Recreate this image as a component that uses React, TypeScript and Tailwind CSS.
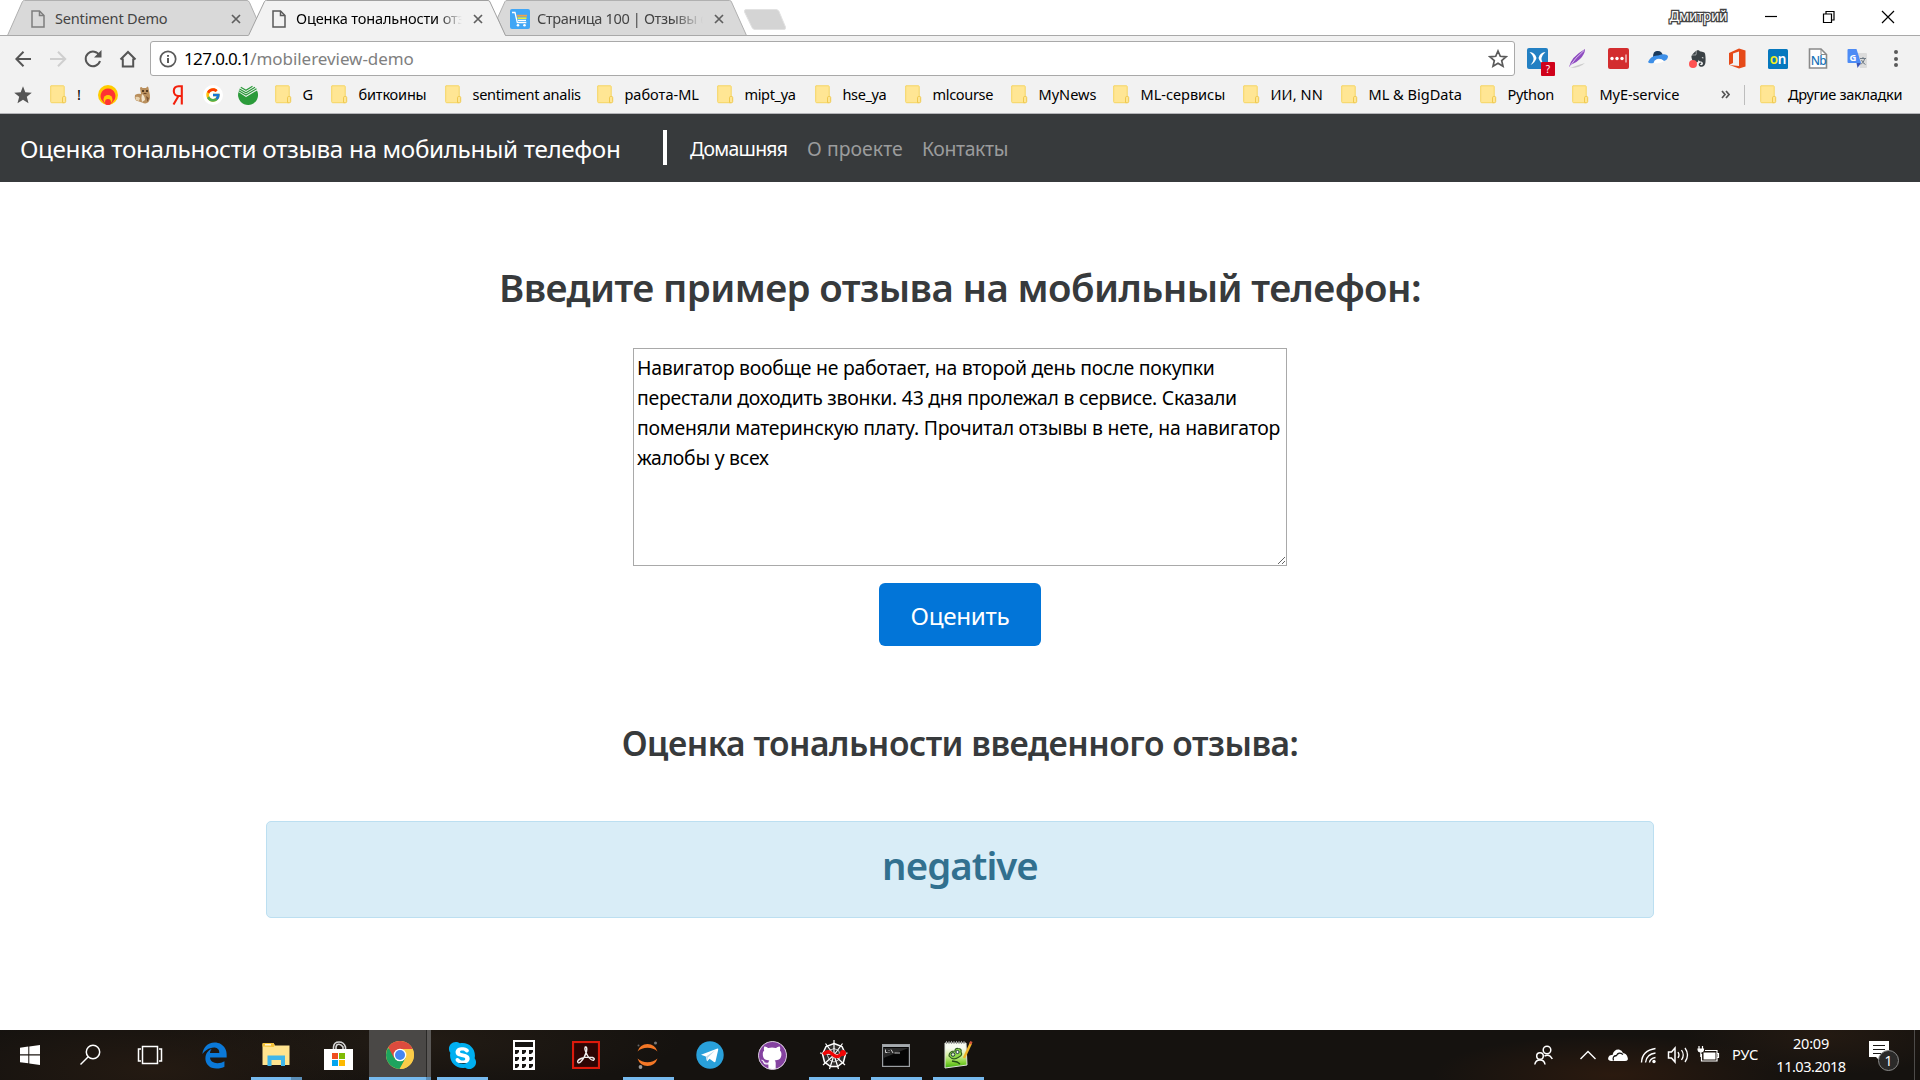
import type { ReactNode } from 'react';
import { FaEdgeLegacy, FaEvernote, FaGithub, FaSkype } from 'react-icons/fa6';
import { FcGoogle } from 'react-icons/fc';

/* ---------- browser tabs ---------- */

function PageIcon({ color }: { color: string }) {
  return (
    <svg width="14" height="18" viewBox="0 0 14 18" fill="none" stroke={color} strokeWidth="1.5">
      <path d="M1 1h7.5L13 5.500V17H1z" />
      <path d="M8.500 1v4.500H13" />
    </svg>
  );
}

function CloseX() {
  return (
    <svg width="10" height="10" viewBox="0 0 10 10" stroke="#5f5f5f" strokeWidth="1.7">
      <path d="M1 1l8 8M9 1L1 9" />
    </svg>
  );
}

function CartIcon() {
  return (
    <svg width="20" height="20" viewBox="0 0 20 20">
      <rect width="20" height="20" rx="2" fill="#41a6f5" />
      <path d="M2 3.500h3l2.300 10h9" fill="none" stroke="#fff" strokeWidth="1.300" />
      <path d="M7 6.700h10" stroke="#f0a24a" strokeWidth="1.800" />
      <path d="M7.500 9.200h9" stroke="#e9f03a" strokeWidth="1.600" />
      <path d="M8 11.400h8" stroke="#fff" strokeWidth="1.200" />
      <circle cx="8" cy="16.300" r="1.300" fill="#fff" />
      <circle cx="14.500" cy="16.300" r="1.300" fill="#fff" />
    </svg>
  );
}

function TabStrip() {
  return (
    <div className="relative flex h-9 shrink-0 bg-white">
      <svg className="absolute top-0 left-0" width="1920" height="36" viewBox="0 0 1920 36" strokeWidth="1">
        <path d="M7.500 35.500L22.500 1.500Q23 .5 24.500 .5H247Q248.500 .5 249.500 2.500L264 35.500z" fill="#d9d9d9" stroke="#b0b0b0" />
        <path d="M497.500 18L505 1.500Q505.500 .5 507 .5H729.500Q731 .5 731.500 2L746.500 35.500H505z" fill="#d9d9d9" stroke="#b0b0b0" />
        <path d="M0 35.500H1920" stroke="#a9a9a9" />
        <path d="M248 36L264.500 1.500Q265 .5 266.500 .5H488Q489.500 .5 490 2L505.500 36z" fill="#f2f2f2" />
        <path d="M248.500 35.500L264.500 1.500Q265 .5 266.500 .5H488Q489.500 .5 490 2L505.500 35.500" fill="none" stroke="#a0a0a0" />
        <path d="M746 9.500H776Q778 9.500 779 11.500L785.500 27Q786 29.500 784 29.500H755Q753 29.500 752 27.500L744.500 12Q744 9.500 746 9.500z" fill="#d4d4d4" stroke="#e2e2e2" />
      </svg>
      <div className="relative flex h-[37px] w-[248px] items-center pl-[31px]">
        <PageIcon color="#7d7d7d" />
        <span className="ml-[10px] w-[176px] text-[14.55px] tracking-[-0.2px] text-[#444]">Sentiment Demo</span>
        <CloseX />
      </div>
      <div className="relative flex h-[37px] w-[248px] items-center pl-[24px]">
        <PageIcon color="#5a5a5a" />
        <span className="ml-[10px] w-[166px] overflow-hidden mask-r-from-85% whitespace-nowrap text-[14.55px] tracking-[-0.14px] text-black">
          Оценка тональности отзыва
        </span>
        <span className="ml-[11px] flex"><CloseX /></span>
      </div>
      <div className="relative flex h-[37px] w-[248px] items-center pl-[14px]">
        <CartIcon />
        <span className="ml-[7px] w-[166px] overflow-hidden mask-r-from-82% whitespace-nowrap text-[14.55px] tracking-[-0.36px] text-[#444]">
          Страница 100 | Отзывы о
        </span>
        <span className="ml-[11px] flex"><CloseX /></span>
      </div>
      <div className="relative ml-auto flex h-[33px] items-center">
        <span className="mr-[38px] text-[13.600px] tracking-[-0.400px] text-white [-webkit-text-stroke:2.500px_#444] [paint-order:stroke_fill]">Дмитрий</span>
        <svg width="130" height="14" viewBox="0 0 130 14" fill="none" stroke="#000" strokeWidth="1.200">
          <path d="M0 6.500h12" />
          <path d="M58.500 4h8v8.500h-8zM61 4V1.500h8V10h-2.500" />
          <path d="M117 1l12 12M129 1L117 13" />
        </svg>
        <span className="w-[25px]" />
      </div>
    </div>
  );
}

/* ---------- toolbar ---------- */

const Translate = () => (
  <svg width="20" height="20" viewBox="0 0 20 20">
    <path d="M9 4h10q1 0 1 1v13q0 1-1 1h-6z" fill="#dcdcdc" />
    <path d="M1.500 0h8l4.500 14H1.500Q.5 14 .5 13V1Q.5 0 1.500 0z" fill="#4e8cf5" />
    <path d="M9.500 14H14l-3.500 5z" fill="#3a55b8" />
    <text x="2.500" y="11.500" fontSize="9.500" fontWeight="700" fill="#fff">G</text>
    <path d="M13 9.500h6M16 8v1.500M17.800 9.500q-1 4-4 6M14.500 11q1 3 4 4.500" stroke="#6f7b86" fill="none" />
  </svg>
);

function Extensions() {
  return (
    <div className="ml-[12px] flex h-[21px] items-center gap-[19.800px]">
      <span className="relative block size-[21px]">
        <svg width="21" height="21" viewBox="0 0 21 21">
          <rect width="21" height="21" rx="2" fill="#2380c3" />
          <path d="M2.500 4Q8 4.500 9.500 10Q8 15 3.500 17Q7 13 6.500 10Q6 7 2.500 4zM18.500 4Q13 4.500 11.500 10q1.500 5 6 7Q14 13 14.500 10Q15 7 18.500 4z" fill="#fff" />
        </svg>
        <span className="absolute top-[14px] left-[14px] flex h-[14px] w-[14px] items-center justify-center rounded-[1px] bg-[#d0021b] text-[10px] leading-none text-white">?</span>
      </span>
      <svg width="20" height="21" viewBox="0 0 20 21">
        <path d="M2 20Q12 20 17 15Q10 17 2 20z" fill="#ccc" />
        <path d="M1 19Q3 9 17 1Q17 6 12 11Q8 15 3.500 16.500z" fill="#8e4bc0" />
        <path d="M2 18Q7 10 16 2.500" stroke="#d9c0ee" fill="none" />
      </svg>
      <svg width="21" height="21" viewBox="0 0 21 21">
        <rect width="21" height="21" rx="2" fill="#d32d2f" />
        <circle cx="4" cy="10.500" r="1.700" fill="#fff" /><circle cx="9" cy="10.500" r="1.700" fill="#fff" /><circle cx="14" cy="10.500" r="1.700" fill="#fff" />
        <path d="M18 6.500v8" stroke="#fff" />
      </svg>
      <svg width="20" height="20" viewBox="0 0 20 20">
        <path d="M5 8Q5 1 10 2Q14 2 15 7z" fill="#1b3a5c" />
        <path d="M0 13Q3 6 10 6.500Q18 4 20 7Q20 11 16 12Q13 9 9 10Q6 11 5.500 14Q1 15 0 13z" fill="#3d8fe8" />
        <path d="M6 14Q7 10 11 10.500Q15 10 16 12.500Q11 15 6 14z" fill="#fff" />
      </svg>
      <span className="relative block size-[20px]">
        <FaEvernote className="ml-px size-[19px] text-[#3a4145]" />
        <span className="absolute top-[11px] left-[1px] size-[8px] rounded-full bg-[#ff5252]" />
      </span>
      <svg width="20" height="21" viewBox="0 0 20 21">
        <path d="M1 5L11 .5l6.500 2v16l-6.500 2L1.500 17l9.500 1V3.500L5 5.500V15l-4 2z" fill="#e64a19" />
      </svg>
      <svg width="20" height="20" viewBox="0 0 20 20">
        <rect width="20" height="20" rx="1.500" fill="#0678be" />
        <text x="1.800" y="14.500" fontSize="13.500" fontWeight="600" fill="#f6f01e">o</text>
        <text x="9.800" y="14.500" fontSize="13.500" fontWeight="600" fill="#fff">n</text>
      </svg>
      <svg width="20" height="21" viewBox="0 0 20 21">
        <path d="M1.500 1h11.500l5.500 5.500V20H1.500z" fill="#fff" stroke="#8a8a8a" strokeWidth="1.600" />
        <path d="M13 1v5.500h5.500" fill="none" stroke="#8a8a8a" />
        <text x="2.700" y="17" fontSize="12" fontWeight="500" letterSpacing="-.7" fill="#1a73b8">Nb</text>
      </svg>
      <Translate />
    </div>
  );
}

function Toolbar() {
  return (
    <div className="flex h-[45px] shrink-0 items-center pl-[15px]">
      <svg width="122" height="20" viewBox="0 0 122 20" fill="none" stroke="#555" strokeWidth="2">
        <path d="M16 10H1.500M8.500 2.800L1.300 10l7.200 7.200" />
        <path d="M35 10h14.500M43 2.800L50.200 10L43 17.200" stroke="#cfcfcf" />
        <path d="M84.500 6.500A7.300 7.300 0 1 0 85 12" />
        <path d="M86.500 1v7.500h-7.500z" fill="#555" stroke="none" />
        <path d="M105.500 10.500L113 3l7.500 7.500M107.800 9.500V17.500h10.400V9.500" />
      </svg>
      <div className="ml-[13px] flex h-[35px] w-[1365px] items-center rounded-[3px] border border-[#a9a9a9] bg-white pr-[6px] pl-[8px]">
        <svg width="18" height="18" viewBox="0 0 18 18">
          <circle cx="9" cy="9" r="7.700" fill="none" stroke="#5a5a5a" strokeWidth="1.700" />
          <path d="M9 8v5M9 5v1.800" stroke="#5a5a5a" strokeWidth="2" />
        </svg>
        <span className="ml-[7px] text-[17px] whitespace-nowrap text-black">
          <span className="tracking-[-0.650px]">127.0.0.1</span>
          <span className="tracking-[-0.050px] text-[#808080]">/mobilereview-demo</span>
        </span>
        <svg className="ml-auto" width="20" height="20" viewBox="0 0 20 20" fill="none" stroke="#5a5a5a" strokeWidth="1.700">
          <path d="M10 2l2.300 5.300 5.700.500-4.300 3.800 1.300 5.600L10 14.300l-5 2.900 1.300-5.600L2 7.800l5.700-.5z" />
        </svg>
      </div>
      <Extensions />
      <span className="ml-[27px] flex flex-col gap-[2.500px]">
        <i className="size-[4px] rounded-full bg-[#5a5a5a]" />
        <i className="size-[4px] rounded-full bg-[#5a5a5a]" />
        <i className="size-[4px] rounded-full bg-[#5a5a5a]" />
      </span>
    </div>
  );
}

/* ---------- bookmarks ---------- */

const Folder = () => (
  <svg className="shrink-0" width="17" height="19" viewBox="0 0 17 19">
    <path d="M1 .8h12.500q.7 0 .7.700V17.700H1.700Q.7 17.700 .7 16.700V1q0-.2.300-.2z" fill="#ffe694" stroke="#f5d563" />
    <path d="M12.500 17.700v-5q0-1.200 1.200-1.200h1q1 0 1 1v4q0 1.200-1.200 1.200z" fill="#ffe694" stroke="#efc94f" />
  </svg>
);

const bookmarks: { label: string; box: string; track: string }[] = [
  { label: 'G', box: 'w-[56px]', track: '' },
  { label: 'биткоины', box: 'w-[114px]', track: 'tracking-[-0.2px]' },
  { label: 'sentiment analis', box: 'w-[152px]', track: 'tracking-[-0.28px]' },
  { label: 'работа-ML', box: 'w-[120px]', track: '' },
  { label: 'mipt_ya', box: 'w-[98px]', track: 'tracking-[-0.37px]' },
  { label: 'hse_ya', box: 'w-[90px]', track: 'tracking-[-0.4px]' },
  { label: 'mlcourse', box: 'w-[106px]', track: 'tracking-[-0.35px]' },
  { label: 'MyNews', box: 'w-[102px]', track: '' },
  { label: 'ML-сервисы', box: 'w-[130px]', track: '' },
  { label: 'ИИ, NN', box: 'w-[98px]', track: 'tracking-[0.1px]' },
  { label: 'ML & BigData', box: 'w-[139px]', track: '' },
  { label: 'Python', box: 'w-[92px]', track: 'tracking-[-0.3px]' },
  { label: 'MyE-service', box: 'w-[149px]', track: 'tracking-[-0.1px]' },
];

function Bookmarks() {
  return (
    <div className="flex h-[33px] shrink-0 items-center border-b border-[#b4b4b8] pb-[5px] pl-[14px] text-[14.550px] whitespace-nowrap text-black">
      <svg width="18" height="18" viewBox="0 0 18 18">
        <path d="M9 .300l2.300 6 6.500.400-5 4.100 1.700 6.500L9 13.700l-5.500 3.600 1.700-6.500-5-4.100 6.500-.4z" fill="#555" />
      </svg>
      <div className="ml-[18px] flex w-[48px] items-center"><Folder /><span className="ml-[10px]">!</span></div>
      <svg width="20" height="20" viewBox="0 0 20 20">
        <circle cx="10" cy="10" r="10" fill="#fc0" />
        <path d="M10 3.500a7.500 7.500 0 0 1 5.500 12.500Q13 20 10 20Q7 20 4.500 16A7.500 7.500 0 0 1 10 3.500z" fill="#f33" />
        <circle cx="10" cy="14.500" r="4.500" fill="#fc0" />
        <circle cx="10" cy="17" r="3" fill="#f33" />
      </svg>
      <svg className="ml-[16px]" width="18" height="20" viewBox="0 0 18 20">
        <path d="M1 10Q4 8 7 9L6 3Q7 1 8.500 3H12Q14 0 14.500 3L15.500 8Q17 13 14.500 17Q12 19.500 8 17.500L2 15.500Q0 13 1 10z" fill="#b98f5d" />
        <path d="M8 9Q11 11 11 15L8 17Q7 12 8 9z" fill="#f1e3cc" />
        <path d="M1.500 12Q4 11 6 13L5 16L2 15z" fill="#e8d3b0" />
        <path d="M12 11l3 2-1.500 4z" fill="#7c5431" />
        <circle cx="9" cy="6" r="1" fill="#33210f" /><circle cx="13" cy="6" r="1" fill="#33210f" />
        <path d="M9.500 8.500h3" stroke="#6b4526" />
      </svg>
      <svg className="ml-[20px]" width="12" height="20" viewBox="0 0 12 20" fill="none" stroke="#f3200c" strokeWidth="2.100">
        <path d="M9.800 19.500V1.200H6.500C3.500 1.200 1.800 3 1.800 6S3.500 11 6.500 11h3M6.500 11L1.500 19.500" />
      </svg>
      <span className="ml-[19px] flex size-[20px] items-center justify-center rounded-full bg-white"><FcGoogle className="size-[16px]" /></span>
      <svg className="ml-[15px]" width="20" height="20" viewBox="0 0 20 20">
        <path d="M.5 7L8 12L19 5.500A10 10 0 1 1 .5 7z" fill="#2b9b3a" />
        <path d="M.8 5.800L8 10L18.500 3.800M1.500 4L8 7.700L17 2.200M2.800 2.200L8 5.300l6.500-4" stroke="#2b9b3a" strokeWidth="1.200" fill="none" />
      </svg>
      <span className="w-[17px]" />
      {bookmarks.map((b) => (
        <div key={b.label} className={`flex shrink-0 items-center ${b.box}`}>
          <Folder />
          <span className={`ml-[10.500px] ${b.track}`}>{b.label}</span>
        </div>
      ))}
      <svg width="9" height="9" viewBox="0 0 9 9" fill="none" stroke="#555" strokeWidth="1.700">
        <path d="M1 1l3 3.500L1 8M5 1l3 3.500L5 8" />
      </svg>
      <span className="ml-[14px] h-[20px] w-px bg-[#bdbdbd]" />
      <span className="ml-[15px] flex items-center"><Folder /><span className="ml-[11px] tracking-[-0.3px]">Другие закладки</span></span>
    </div>
  );
}

/* ---------- page ---------- */

function Page() {
  return (
    <div className="flex min-h-0 flex-1 flex-col bg-white">
      <nav className="flex h-[68px] shrink-0 items-center bg-[#373a3c] pl-[20px] whitespace-nowrap text-white">
        <span className="w-[643px] pt-[2px] text-[24.250px] tracking-[-0.350px]">Оценка тональности отзыва на мобильный телефон</span>
        <span className="mb-px h-[35px] w-[4px] bg-white" />
        <div className="flex pt-[2px] text-[19.400px]">
          <span className="ml-[23px] w-[117px] tracking-[-0.7px]">Домашняя</span>
          <span className="w-[115px] tracking-[0.050px] text-[#9b9c9d]">О проекте</span>
          <span className="tracking-[-0.370px] text-[#9b9c9d]">Контакты</span>
        </div>
      </nav>
      <main className="flex flex-col items-center text-[#373a3c]">
        <h1 className="mt-[83px] text-[38.400px] leading-[44px] font-semibold tracking-[-0.600px]">Введите пример отзыва на мобильный телефон:</h1>
        <textarea
          className="mt-[39px] h-[218px] w-[654px] resize border border-[#a9a9a9] py-[4px] pr-px pl-[3px] text-[19.400px] leading-[30px] tracking-[-0.240px] text-black outline-none"
          defaultValue="Навигатор вообще не работает, на второй день после покупки перестали доходить звонки. 43 дня пролежал в сервисе. Сказали поменяли материнскую плату. Прочитал отзывы в нете, на навигатор жалобы у всех"
        />
        <button className="mt-[17px] h-[63px] w-[162px] rounded-[6px] bg-[#0275d8] pt-[3px] text-[24.250px] tracking-[-0.300px] text-white">Оценить</button>
        <h3 className="mt-[76px] text-[33.600px] leading-[42px] font-semibold tracking-[-0.480px]">Оценка тональности введенного отзыва:</h3>
        <div className="mt-[57px] flex h-[97px] w-[1388px] justify-center rounded-[5px] border border-[#bcdff1] bg-[#d9edf7] pt-[21px]">
          <span className="text-[38.400px] leading-[44px] font-semibold tracking-[-0.950px] text-[#31708f]">negative</span>
        </div>
      </main>
    </div>
  );
}

/* ---------- taskbar ---------- */

const Explorer = () => (
  <svg width="28" height="24" viewBox="0 0 28 24">
    <path d="M.5 3V1Q.5 0 1.500 0h10l1.500 2.500H27.500V22H.5z" fill="#ffe48f" />
    <path d="M.5 3.500V1Q.5 0 1.500 0h10l1.300 2.500-1.300 1.500z" fill="#f5c33b" />
    <path d="M3 1.800h6" stroke="#fff" strokeWidth="1.200" />
    <path d="M5.500 23V12.500h17.500V23h-4v-6h-9.500v6z" fill="#3fb6ea" />
  </svg>
);

const Store = () => (
  <svg width="29" height="29" viewBox="0 0 29 29">
    <path d="M9.500 8V6Q10 1 15 1t6.500 5v2M12 8V6Q12.500 3 15 3.200T19 6v2" fill="none" stroke="#d8d8d8" strokeWidth="1.600" />
    <path d="M0 8h29v21H0z" fill="#fff" />
    <path d="M8 12h6v6H8z" fill="#f04e1f" /><path d="M15 12h6v6h-6z" fill="#80bb03" />
    <path d="M8 19h6v6H8z" fill="#05a5ef" /><path d="M15 19h6v6h-6z" fill="#fdb900" />
  </svg>
);

const Chrome = () => (
  <svg width="28" height="28" viewBox="0 0 28 28">
    <circle cx="14" cy="14" r="14" fill="#fbcc48" />
    <path d="M14 14L1.880 7A14 14 0 0 0 14 28l6-11z" fill="#1ea45e" />
    <path d="M14 8H26.600A14 14 0 0 0 2.300 6.300L8 17z" fill="#dc4b3e" />
    <path d="M19.500 17.200L13.500 28A14 14 0 0 0 26.600 8H14z" fill="#fbcc48" />
    <circle cx="14" cy="14" r="6.300" fill="#fff" />
    <circle cx="14" cy="14" r="5" fill="#4586f3" />
  </svg>
);

const Skype = () => (
  <span className="relative flex size-[28px] items-center justify-center">
    <span className="absolute size-[16px] bg-white" />
    <FaSkype className="relative size-[31px] shrink-0 text-[#00aff0]" />
  </span>
);

const Calculator = () => (
  <svg width="22" height="30" viewBox="0 0 22 30">
    <path d="M0 0h22v30H0z" fill="#fff" />
    <path d="M2 2h18v5H2z" fill="#171513" />
    {[10, 17, 24].flatMap((y) => [2, 9, 16].map((x) => <path key={`${x}-${y}`} d={`M${x} ${y}h4v2l-2 2h-2z`} fill="#171513" />))}
  </svg>
);

const Acrobat = () => (
  <svg width="28" height="28" viewBox="0 0 28 28">
    <rect x="1" y="1" width="26" height="26" fill="#2c0504" stroke="#dd1a0c" strokeWidth="2.200" />
    <path d="M6 21.500Q4.500 19.500 9 17.500Q14 15.500 20.500 16.500Q23.500 17.800 21.500 19.300Q18.500 19.500 15.500 14.500Q12 8.500 13.200 6Q15.500 5.500 14.500 10.500Q12.500 17 9 20.500Q7 22.500 6 21.500z" fill="none" stroke="#f0eeee" strokeWidth="1.400" />
  </svg>
);

const Jupyter = () => (
  <svg width="24" height="28" viewBox="0 0 24 28">
    <path d="M1.500 10.500Q4 3 11.500 3T21.500 10.500Q17.500 6.800 11.500 6.800T1.500 10.500zM1.500 17.500Q4 25 11.500 25t10-7.500Q17.500 21.200 11.500 21.200T1.500 17.500z" fill="#f37726" />
    <circle cx="19.500" cy="2" r="1.500" fill="#777" /><circle cx="4.500" cy="26" r="1.900" fill="#999" /><circle cx="2.500" cy="4.500" r="1" fill="#666" />
  </svg>
);

const Telegram = () => (
  <svg width="28" height="28" viewBox="0 0 28 28">
    <circle cx="14" cy="14" r="13.700" fill="#29a0da" />
    <path d="M5 13.800L21.500 7.500Q22.500 7.500 22.200 8.700L19.500 20.500Q19 21.500 18 21L13.500 17.800L11.500 20Q11 20.500 10.800 19.500L9.800 15.500z" fill="#fff" />
    <path d="M10 15.500L19 9.500L12 16.500L11 20z" fill="#bcd9e9" />
  </svg>
);

const GithubDesktop = () => (
  <span className="relative flex size-[29px] items-center justify-center overflow-hidden rounded-full border border-[#d8c6df] bg-white">
    <FaGithub className="size-[30px] shrink-0 text-[#8442a0]" />
  </span>
);

const Spyder = () => (
  <svg width="30" height="30" viewBox="0 0 30 30" fill="none" stroke="#fff">
    <path d="M15 3.500l8 3 3.500 7.500-2 8-6 4.500h-7l-6-4.500-2-8 3.500-7.500z" fill="#2f2d2c" strokeWidth="1.500" />
    <path d="M15 8.500l4.500 2 2 5-2 4.500-4.500 2-4.500-2-2-4.500 2-5z" stroke="#c9c9c9" strokeWidth="1" />
    <path d="M15 0v15M15 15L23.500 3.500M15 15l13.500-2M15 15l11 10M15 15l4.500 14M15 15l-4.500 14M15 15L4 25M15 15L1 13M15 15L6.500 3.500" strokeWidth="1.200" />
    <path d="M4.500 14.500q4-4.500 8-1t6 3 6-4" stroke="#f00505" strokeWidth="3.600" />
    <circle cx="24" cy="13" r="3" fill="#f00505" stroke="none" />
  </svg>
);

const Cmd = () => (
  <svg width="28" height="23" viewBox="0 0 28 23">
    <rect x=".6" y=".6" width="26.800" height="21.800" fill="#050505" stroke="#9b9fa3" strokeWidth="1.200" />
    <path d="M1 1h26v2H1z" fill="#a5aaae" />
    <path d="M1.500 4h25l-25 10z" fill="#2a2a2a" />
    <path d="M3.500 5.500v3h2M7 6v.8M7 8v.8M9 5.500l2 3.500M12.500 9h5.500" stroke="#ddd" fill="none" strokeWidth=".9" />
  </svg>
);

const Notepad = () => (
  <svg width="30" height="30" viewBox="0 0 30 30">
    <defs>
      <linearGradient id="npp" x1="0" y1="0" x2="0" y2="1">
        <stop offset=".2" stopColor="#f6faf0" /><stop offset=".5" stopColor="#d5f0a0" /><stop offset=".8" stopColor="#7fd030" /><stop offset="1" stopColor="#3cab12" />
      </linearGradient>
    </defs>
    <path d="M2 3h21l1 22-22 3z" fill="url(#npp)" stroke="#dfe3da" />
    <path d="M3 2.500h19" stroke="#999" strokeWidth="3" strokeDasharray="1 1.500" />
    <path d="M6 16q0-5 6-5 0-3 3-2.500 4 0 3 3.500 2 3-2 5-6 4-10-1z" fill="#8fd84a" stroke="#2f5b1c" strokeWidth="1.200" />
    <circle cx="14.500" cy="12" r="1.600" fill="#fff" stroke="#234" /><circle cx="10" cy="14.500" r="1.800" fill="#dff5c0" stroke="#234" />
    <path d="M9 21l5 1 3 2" stroke="#245014" fill="none" strokeWidth="1.500" />
    <path d="M21 18L28 3" stroke="#eeb428" strokeWidth="2.500" /><path d="M27.200 4L28.500 1.500" stroke="#d3573b" strokeWidth="2.500" />
  </svg>
);

const apps: { id: string; icon: ReactNode; state?: 'open' | 'stack' | 'active' }[] = [
  { id: 'edge', icon: <FaEdgeLegacy className="size-[27px] text-[#0b79d8]" /> },
  { id: 'explorer', icon: <Explorer />, state: 'stack' },
  { id: 'store', icon: <Store /> },
  { id: 'chrome', icon: <Chrome />, state: 'active' },
  { id: 'skype', icon: <Skype />, state: 'open' },
  { id: 'calculator', icon: <Calculator /> },
  { id: 'acrobat', icon: <Acrobat /> },
  { id: 'jupyter', icon: <Jupyter />, state: 'open' },
  { id: 'telegram', icon: <Telegram /> },
  { id: 'github', icon: <GithubDesktop /> },
  { id: 'spyder', icon: <Spyder />, state: 'open' },
  { id: 'cmd', icon: <Cmd />, state: 'open' },
  { id: 'notepad', icon: <Notepad />, state: 'open' },
];

function TaskbarApp({ icon, state }: { icon: ReactNode; state?: 'open' | 'stack' | 'active' }) {
  return (
    <div className={`relative flex h-full w-[62px] items-center justify-center ${state === 'active' ? 'bg-[#4a4846]' : ''}`}>
      {state === 'active' && <span className="absolute inset-y-0 right-0 w-[5px] border-l border-[#2a2927] bg-[#5a5856]" />}
      <span className="relative flex">{icon}</span>
      {state === 'open' && <span className="absolute bottom-0 left-[6px] h-[3px] w-[51px] bg-[#76b9ed]" />}
      {state === 'stack' && <span className="absolute bottom-0 left-[6px] h-[3px] w-[51px] border-r-[11px] border-[#5a8db6] bg-[#76b9ed]" />}
      {state === 'active' && <span className="absolute inset-x-0 bottom-0 h-[3px] border-r-[5px] border-[#5a8db6] bg-[#76b9ed]" />}
    </div>
  );
}

function Tray() {
  return (
    <div className="ml-auto flex h-full items-center text-[14.550px] text-white">
      <svg width="190" height="24" viewBox="0 0 190 24" fill="none" stroke="#fff" strokeWidth="1.500">
        <circle cx="13" cy="7" r="3.800" /><circle cx="6" cy="13" r="3.300" />
        <path d="M.8 21.500Q1.500 17 6 17t5 4.500M10.500 13q5-2.500 7.800 3" />
        <path d="M46.500 16l7.500-7.500 7.500 7.500" strokeWidth="1.400" />
        <path d="M78 18h-1Q73 17.500 74.500 14Q75.500 11.500 78.500 12Q80 6 85 6.500Q88 7 89 10Q92.500 10.500 93.500 14Q95 18 91 18z" fill="#fff" stroke="none" />
        <path d="M79.500 17.500Q78 13 82.500 12.500Q84.500 8.500 89 11.500" stroke="#171513" strokeWidth="1.300" />
        <circle cx="120" cy="18.500" r="1.700" fill="#fff" stroke="none" />
        <path d="M115.500 19.500q.5-4 6-5M111.500 19.500q1-8.500 10-9.500M107.500 19.500q.5-12 14-14" strokeWidth="1.400" />
        <path d="M134.500 9h3l3.500-4v14l-3.500-4h-3z" />
        <path d="M144 9q2 3 0 6M147.500 7q3.500 5 0 10M151 5q5 7 0 14" strokeWidth="1.300" />
        <path d="M167.500 11V18h15.500V7.500h-12M183 10.500h1.500v4H183" strokeWidth="1.200" /><path d="M169.500 9.500h12v7h-12z" fill="#fff" stroke="none" />
        <path d="M165 3v3M168.500 3v3M164 6h5.500q0 3-2.700 3T164 6zM166.800 9v5" fill="#fff" strokeWidth="1.200" />
      </svg>
      <span className="ml-[8px] w-[44px]">РУС</span>
      <div className="flex w-[70px] flex-col items-center leading-[23px] whitespace-nowrap">
        <span className="tracking-[-0.240px]">20:09</span>
        <span className="tracking-[-0.500px]">11.03.2018</span>
      </div>
      <span className="relative ml-[23px] block h-[30px] w-[30px]">
        <svg width="22" height="22" viewBox="0 0 22 22">
          <path d="M0 1h20v16H11v4l-4-4H0z" fill="#fff" />
          <path d="M4 5.500h12M4 9.500h12M4 13.500h8" stroke="#1a1816" strokeWidth="1.200" />
        </svg>
        <span className="absolute top-[10px] left-[9px] flex size-[21px] items-center justify-center rounded-full border border-[#8a8a8a] bg-[#2b2a29] text-[14px] leading-none">1</span>
      </span>
      <span className="ml-[15px] h-full w-px bg-[#4d4b49]" />
      <span className="w-[5px]" />
    </div>
  );
}

function Taskbar() {
  return (
    <div className="flex h-[50px] shrink-0 bg-[#15120f] bg-[radial-gradient(ellipse_220px_60px_at_8%_80%,#241a12,transparent),radial-gradient(ellipse_260px_50px_at_22%_20%,#221b14,transparent),radial-gradient(ellipse_180px_40px_at_84%_90%,#2b1a0f,transparent),radial-gradient(ellipse_140px_40px_at_95%_10%,#241a12,transparent)]">
      <div className="flex h-full w-[183px] items-center pl-[20px]">
        <svg width="144" height="24" viewBox="0 0 144 24" fill="none" stroke="#fff" strokeWidth="1.500">
          <path d="M0 4.800l8.300-1.200V11.300H0zM9.300 3.400L20 2v9.300H9.300zM0 12.500h8.300v7.800L0 19.200zM9.300 12.500H20V22L9.300 20.500z" fill="#fff" stroke="none" />
          <circle cx="73" cy="9" r="6.700" /><path d="M68.500 13.500L60.500 21.500" />
          <path d="M122.500 3.500h15v17h-15zM121 6h-2.500v12h2.500M139 6h2.500v12H139" />
        </svg>
      </div>
      {apps.map((a) => (
        <TaskbarApp key={a.id} icon={a.icon} state={a.state} />
      ))}
      <Tray />
    </div>
  );
}

export default function App() {
  return (
    <div className="flex h-[1080px] w-[1920px] flex-col overflow-hidden bg-[#f2f2f2] font-['Noto_Sans','Open_Sans',sans-serif]">
      <TabStrip />
      <Toolbar />
      <Bookmarks />
      <Page />
      <Taskbar />
    </div>
  );
}
